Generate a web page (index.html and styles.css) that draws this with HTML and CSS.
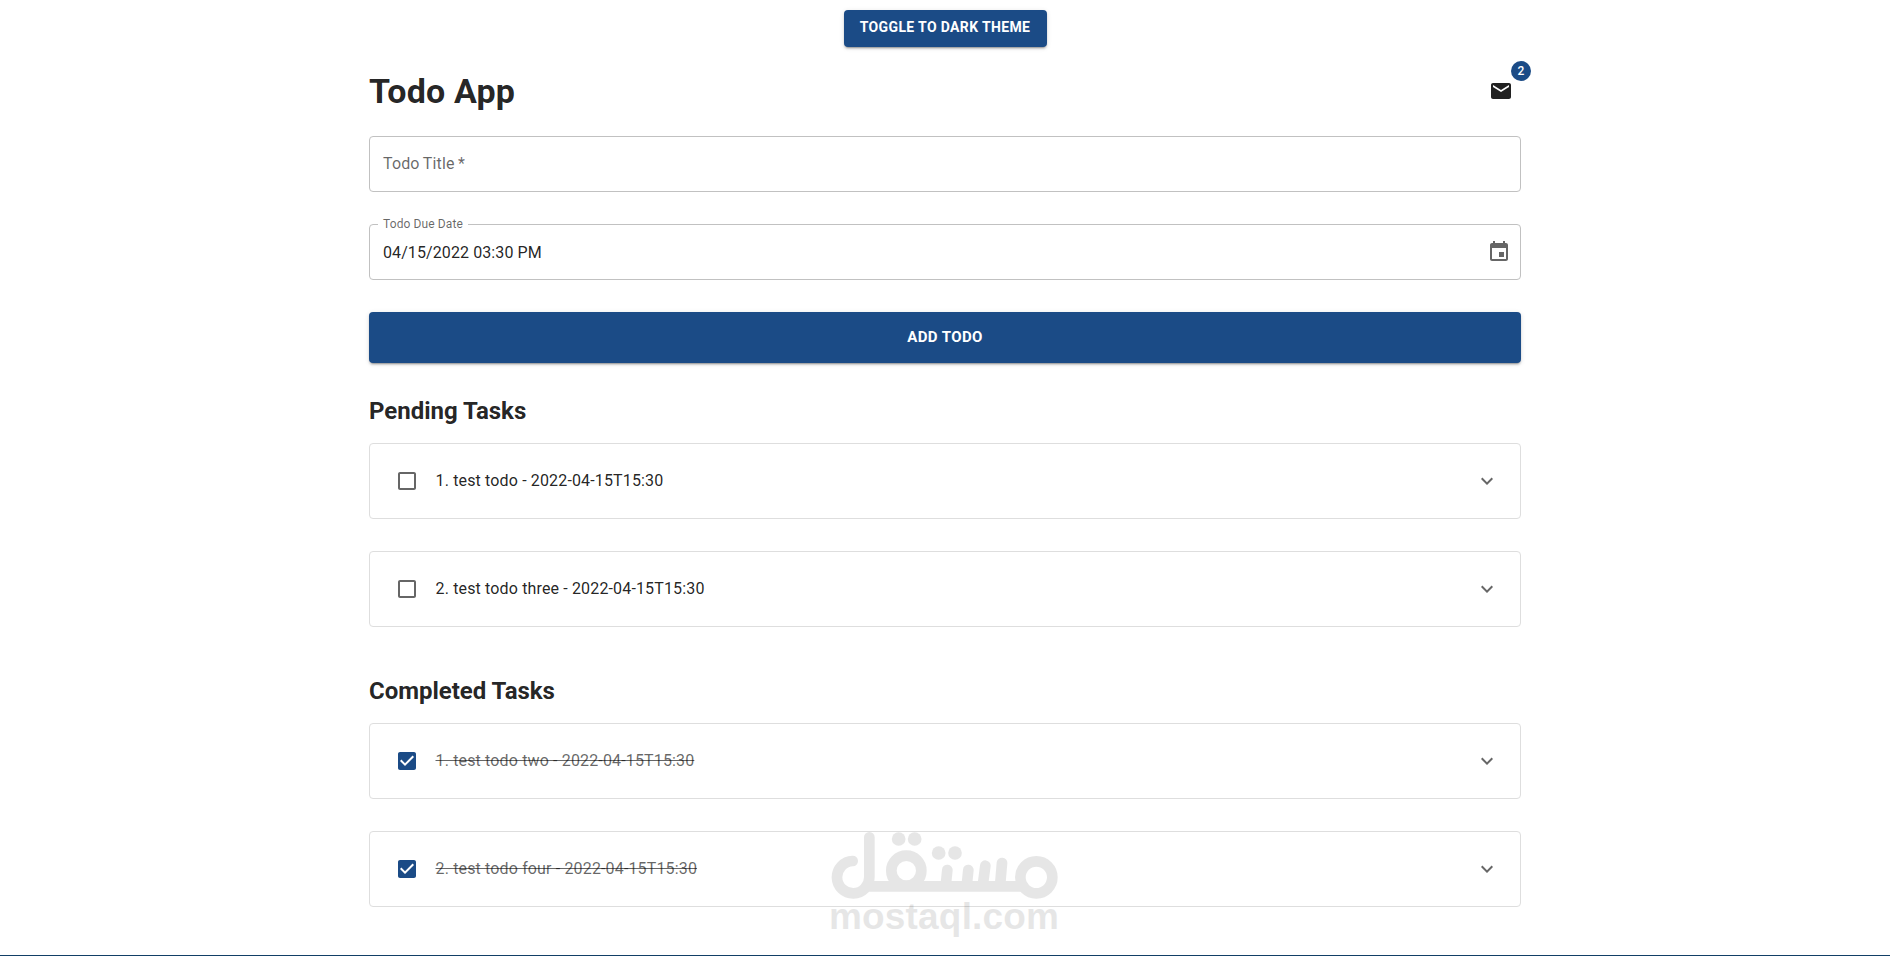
FILE: index.html
```
<!DOCTYPE html>
<html lang="en">
<head>
    <meta charset="UTF-8">
    <meta name="viewport" content="width=device-width, initial-scale=1.0">
    <title>Todo App</title>
    <link rel="stylesheet" href="styles.css">
</head>
<body>
    <button class="button theme-toggle">Toggle to dark theme</button>
    <main class="container">
        <header class="header">
            <h1 class="title">Todo App</h1>
            <div class="mail">
                <svg class="icon" viewBox="0 0 24 24"><path d="M20 4H4c-1.1 0-1.99.9-1.99 2L2 18c0 1.1.9 2 2 2h16c1.1 0 2-.9 2-2V6c0-1.1-.9-2-2-2zm0 4l-8 5-8-5V6l8 5 8-5v2z"/></svg>
                <span class="badge">2</span>
            </div>
        </header>

        <form class="form">
            <div class="field">
                <label class="placeholder">Todo Title *</label>
            </div>
            <div class="field">
                <label class="label">Todo Due Date</label>
                <span class="value">04/15/2022 03:30 PM</span>
                <svg class="icon muted" viewBox="0 0 24 24"><path d="M17 12h-5v5h5v-5zM16 1v2H8V1H6v2H5c-1.11 0-1.99.9-1.99 2L3 19c0 1.1.89 2 2 2h14c1.1 0 2-.9 2-2V5c0-1.1-.9-2-2-2h-1V1h-2zm3 18H5V8h14v11z"/></svg>
            </div>
            <button type="button" class="button add">Add Todo</button>
        </form>

        <section class="tasks">
            <h2 class="subtitle">Pending Tasks</h2>
            <div class="task">
                <svg class="icon muted" viewBox="0 0 24 24"><path d="M19 5v14H5V5h14m0-2H5c-1.1 0-2 .9-2 2v14c0 1.1.9 2 2 2h14c1.1 0 2-.9 2-2V5c0-1.1-.9-2-2-2z"/></svg>
                <span class="text">1. test todo - 2022-04-15T15:30</span>
                <svg class="icon muted chevron" viewBox="0 0 24 24"><path d="M16.59 8.59L12 13.17 7.41 8.59 6 10l6 6 6-6z"/></svg>
            </div>
            <div class="task">
                <svg class="icon muted" viewBox="0 0 24 24"><path d="M19 5v14H5V5h14m0-2H5c-1.1 0-2 .9-2 2v14c0 1.1.9 2 2 2h14c1.1 0 2-.9 2-2V5c0-1.1-.9-2-2-2z"/></svg>
                <span class="text">2. test todo three - 2022-04-15T15:30</span>
                <svg class="icon muted chevron" viewBox="0 0 24 24"><path d="M16.59 8.59L12 13.17 7.41 8.59 6 10l6 6 6-6z"/></svg>
            </div>
        </section>

        <section class="tasks completed">
            <h2 class="subtitle">Completed Tasks</h2>
            <div class="task">
                <svg class="icon checked" viewBox="0 0 24 24"><path d="M19 3H5c-1.11 0-2 .9-2 2v14c0 1.1.89 2 2 2h14c1.11 0 2-.9 2-2V5c0-1.1-.89-2-2-2zm-9 14l-5-5 1.41-1.41L10 14.17l7.59-7.59L19 8l-9 9z"/></svg>
                <span class="text">1. test todo two - 2022-04-15T15:30</span>
                <svg class="icon muted chevron" viewBox="0 0 24 24"><path d="M16.59 8.59L12 13.17 7.41 8.59 6 10l6 6 6-6z"/></svg>
            </div>
            <div class="task">
                <svg class="icon checked" viewBox="0 0 24 24"><path d="M19 3H5c-1.11 0-2 .9-2 2v14c0 1.1.89 2 2 2h14c1.11 0 2-.9 2-2V5c0-1.1-.89-2-2-2zm-9 14l-5-5 1.41-1.41L10 14.17l7.59-7.59L19 8l-9 9z"/></svg>
                <span class="text">2. test todo four - 2022-04-15T15:30</span>
                <svg class="icon muted chevron" viewBox="0 0 24 24"><path d="M16.59 8.59L12 13.17 7.41 8.59 6 10l6 6 6-6z"/></svg>
            </div>
        </section>
    </main>

    <!-- mostaql logo -->
    <svg class="watermark" viewBox="90 60 687 330">
        <g class="mark">
            <path d="M158 153a48.500 48.500 0 1 0 50 48V82M200 229H670M437 229l5-49M500 229l5-49M548 229l8-62M600 229l6-70"/>
            <circle cx="319" cy="182" r="45"/>
            <circle cx="709" cy="202" r="48"/>
        </g>
        <g class="dots">
            <circle cx="296" cy="87" r="20.500"/>
            <circle cx="344" cy="87" r="20.500"/>
            <circle cx="416" cy="129" r="20.500"/>
            <circle cx="465" cy="129" r="20.500"/>
        </g>
        <text class="brand" x="87" y="357" textLength="690">mostaql.com</text>
    </svg>
</body>
</html>
```

FILE: styles.css
```
*{
    margin: 0;
    padding: 0;
    box-sizing: border-box;
}
html, body{
    height: 100%;
}
body{
    font-family: Roboto, "Liberation Sans", sans-serif;
    font-size: 16px;
    color: rgba(0, 0, 0, .87);
    background-color: white;
    display: flex;
    flex-direction: column;
    align-items: center;
    padding-top: 10px;
    border-bottom: 1px solid #123f66;
    overflow: hidden;
    position: relative;
}
.button{
    border: none;
    border-radius: 4px;
    background-color: #1b4b86;
    color: white;
    font-family: inherit;
    font-weight: 700;
    line-height: 1.75;
    letter-spacing: .02857em;
    text-transform: uppercase;
    box-shadow: 0 3px 1px -2px rgba(0, 0, 0, .2),
                0 2px 2px rgba(0, 0, 0, .14),
                0 1px 5px rgba(0, 0, 0, .12);
}
.theme-toggle{
    font-size: 14px;
    width: 203px;
    height: 37px;
    padding-bottom: 3px;
    letter-spacing: .026em;
}
.container{
    width: 1152px;
}
.header{
    display: flex;
    justify-content: space-between;
    align-items: center;
    height: 42px;
    margin-top: 23px;
}
.title{
    font-size: 34px;
    line-height: 42px;
    letter-spacing: .005em;
}
.icon{
    width: 24px;
    height: 24px;
    fill: currentColor;
    display: block;
}
.muted{
    color: rgba(0, 0, 0, .6);
}
.checked{
    color: #1b4b86;
}
.mail{
    position: relative;
    margin-right: 8px;
}
.badge{
    position: absolute;
    top: -18px;
    right: -18px;
    width: 20px;
    height: 20px;
    border-radius: 50%;
    background-color: #1b4b86;
    color: white;
    font-size: 12px;
    font-weight: 500;
    line-height: 20px;
    text-align: center;
}
.form{
    display: flex;
    flex-direction: column;
    gap: 32px;
    margin-top: 24px;
}
.field{
    display: flex;
    align-items: center;
    justify-content: space-between;
    position: relative;
    height: 56px;
    padding: 0 9px 0 13px;
    border: 1px solid #c1c1c1;
    border-radius: 4px;
}
.placeholder{
    padding-bottom: 2px;
    color: rgba(0, 0, 0, .6);
    letter-spacing: .00938em;
    word-spacing: -.7px;
}
.label{
    position: absolute;
    top: -9px;
    left: 8px;
    padding: 0 5px;
    background-color: white;
    color: rgba(0, 0, 0, .6);
    font-size: 12px;
    line-height: 16px;
    letter-spacing: .00938em;
}
.value{
    letter-spacing: .006em;
}
.add{
    font-size: 15px;
    height: 51px;
    letter-spacing: .026em;
}
.tasks{
    display: flex;
    flex-direction: column;
    gap: 32px;
    margin-top: 32px;
}
.completed{
    margin-top: 48px;
}
.subtitle{
    font-size: 24px;
    line-height: 32px;
    letter-spacing: -.001em;
    margin-bottom: -16px;
}
.task{
    display: flex;
    align-items: center;
    height: 76px;
    padding: 0 21px 0 25px;
    border: 1px solid #dedede;
    border-radius: 4px;
}
.text{
    margin-left: 16.5px;
    padding-bottom: 2px;
    letter-spacing: .00938em;
}
.chevron{
    margin-left: auto;
}
.completed .text{
    color: rgba(0, 0, 0, .6);
    text-decoration: line-through;
}
.watermark{
    position: absolute;
    left: 830px;
    top: 830px;
    width: 229px;
    height: 110px;
    opacity: .095;
}
.mark{
    fill: none;
    stroke: black;
    stroke-width: 32;
    stroke-linecap: round;
}
.brand{
    font-family: "Liberation Sans", sans-serif;
    font-size: 111px;
    font-weight: 700;
}
```
